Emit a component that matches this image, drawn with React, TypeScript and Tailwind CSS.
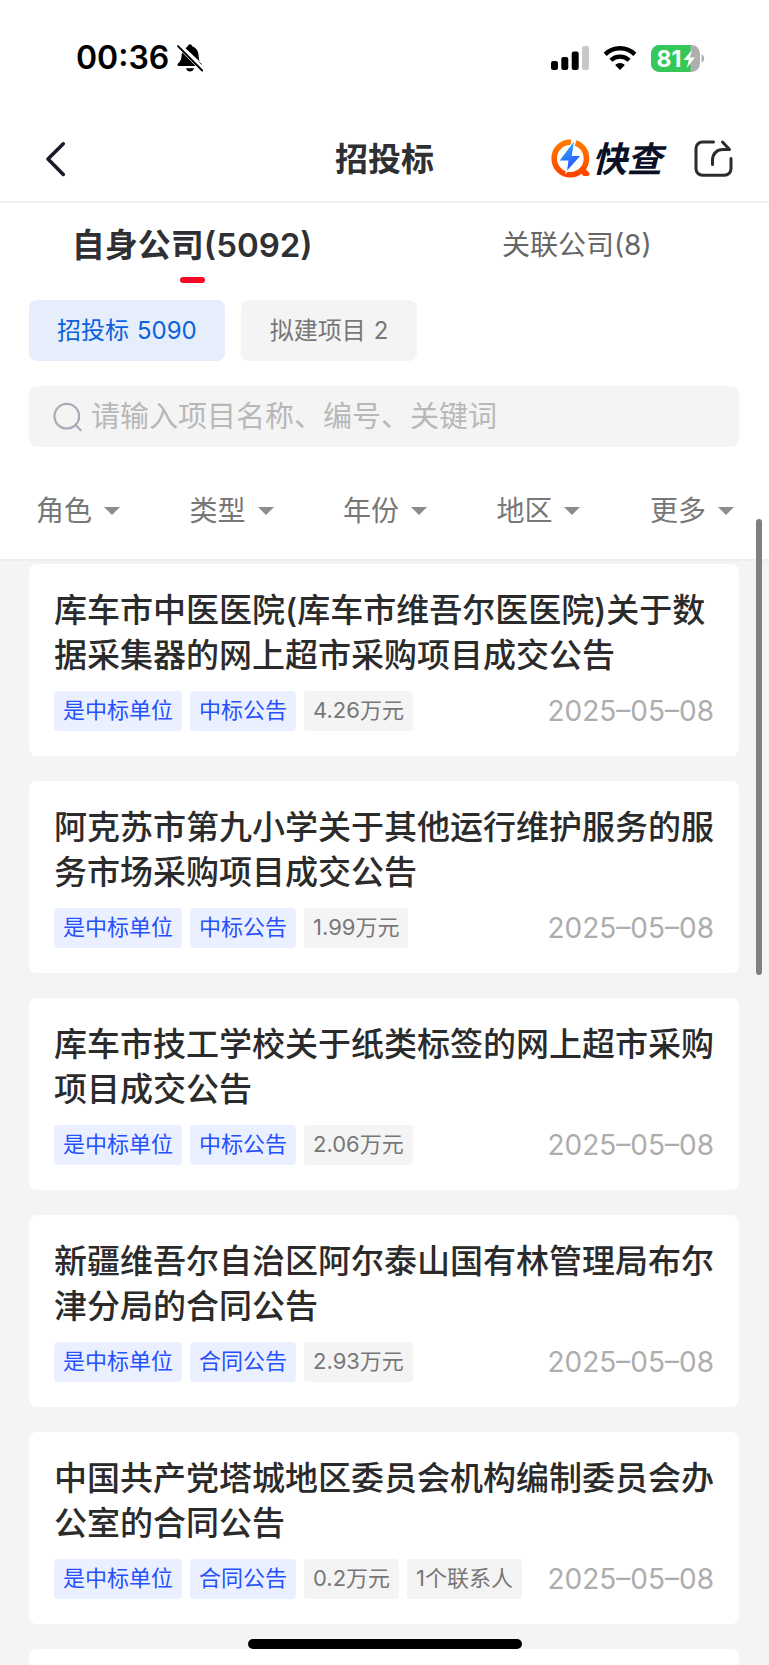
type Tag = { text: string; tone: "blue" | "gray" };
type Notice = { title: string; tags: Tag[]; date: string };

const notice = (title: string, kind: string, extras: string[]): Notice => ({
  title,
  date: "2025–05–08",
  tags: [
    { text: "是中标单位", tone: "blue" },
    { text: kind, tone: "blue" },
    ...extras.map((text): Tag => ({ text, tone: "gray" })),
  ],
});

const notices: Notice[] = [
  notice("库车市中医医院(库车市维吾尔医医院)关于数据采集器的网上超市采购项目成交公告", "中标公告", ["4.26万元"]),
  notice("阿克苏市第九小学关于其他运行维护服务的服务市场采购项目成交公告", "中标公告", ["1.99万元"]),
  notice("库车市技工学校关于纸类标签的网上超市采购项目成交公告", "中标公告", ["2.06万元"]),
  notice("新疆维吾尔自治区阿尔泰山国有林管理局布尔津分局的合同公告", "合同公告", ["2.93万元"]),
  notice("中国共产党塔城地区委员会机构编制委员会办公室的合同公告", "合同公告", ["0.2万元", "1个联系人"]),
];

const filters = ["角色", "类型", "年份", "地区", "更多"];

function StatusBar() {
  return (
    <div className="flex h-[116px] shrink-0 items-center justify-between pr-16 pl-[76px]">
      <div className="flex items-center gap-2 text-black">
        <span className="text-[32px] leading-10 font-semibold">00:36</span>
        <svg className="h-7 w-[26px]" viewBox="0 0 26 28" aria-hidden="true">
          <path d="M8.5 4.2C9.6 3 10.4 2.7 10.8 2.2 11.3 1 12 .3 13 .3s1.7.7 2.2 1.9c3.7 1.3 6 4.3 6.3 8.3.2 3.2.4 5.300 1.200 6.900zM5.300 8.400 18.500 22H1.700c-1.200 0-1.600-1.300-.9-2.200C3 17.500 4.300 16 4.500 12.500c.1-1.700.3-2.900.8-4.100zM9 24.200h8c-.6 2-2 3.300-4 3.300s-3.400-1.300-4-3.300zM21 17l3.600 2.800v1.200z" />
          <path d="M1 2.200 25.200 26.500" stroke="#000" strokeWidth="1.900" strokeLinecap="round" />
        </svg>
      </div>
      <div className="flex items-center">
        <svg className="h-6 w-[38px]" viewBox="0 0 38 24" aria-hidden="true">
          <rect x="0" y="15" width="7" height="9" rx="2.200" />
          <rect x="10.300" y="11" width="7" height="13" rx="2.200" />
          <rect x="20.700" y="5.500" width="7" height="18.500" rx="2.200" />
          <rect x="31" y="0" width="7" height="24" rx="2.200" fill="#c8c8c8" />
        </svg>
        <svg className="ml-[14px] h-6 w-[34px]" viewBox="0 0 34 24" aria-hidden="true">
          <g fill="none" stroke="#000" strokeWidth="4.400">
            <path d="M2.200 8.400a21 21 0 0 1 29.600 0" />
            <path d="M7.900 14.300a13 13 0 0 1 18.200 0" />
          </g>
          <path d="M17 24l-4.900-4.900a7 7 0 0 1 9.800 0z" />
        </svg>
        <svg className="ml-[14px] h-[27px] w-[54px]" viewBox="0 0 54 27" role="img" aria-label="81%">
          <defs>
            <clipPath id="cell">
              <rect width="49" height="27" rx="8.500" />
            </clipPath>
          </defs>
          <g clipPath="url(#cell)">
            <rect width="49" height="27" fill="#afafaf" />
            <rect width="39.500" height="27" fill="#34c759" />
          </g>
          <path d="M50.500 9.500c3.600 1 3.600 7 0 8z" fill="#afafaf" />
          <text x="5.500" y="21.500" fill="#fff" fontSize="23" fontWeight="700" fontFamily="Inter, sans-serif">81</text>
          <path d="M41 5 32.500 15h5.300L35.800 23 44 12.500h-5z" fill="#fff" />
        </svg>
      </div>
    </div>
  );
}

function Header() {
  return (
    <header className="grid h-[87px] shrink-0 grid-cols-[1fr_auto_1fr] items-center border-b-2 border-[#f0f0f0] px-9">
      <button type="button" aria-label="返回" className="justify-self-start pl-[9px]">
        <svg className="h-9 w-[22px]" viewBox="0 0 22 36" fill="none" stroke="#1a1a28" strokeWidth="3.600" strokeLinecap="round" strokeLinejoin="round">
          <path d="M18.300 2.800 3 18 18.300 33.400" />
        </svg>
      </button>
      <h1 className="text-[33px] leading-10 font-semibold text-[#2f3033]">招投标</h1>
      <div className="flex items-center justify-self-end">
        <svg className="h-[39px] w-[39px]" viewBox="0 0 39 39" aria-hidden="true">
          <defs>
            <linearGradient id="ring" x1="0" y1="0" x2="0" y2="1">
              <stop offset="0" stopColor="#ff7a00" />
              <stop offset="1" stopColor="#ff4400" />
            </linearGradient>
            <linearGradient id="bolt" x1="0" y1="0" x2="0.300" y2="1">
              <stop offset="0" stopColor="#35c0ff" />
              <stop offset="1" stopColor="#2450ff" />
            </linearGradient>
          </defs>
          <path d="M20 3.200C10.400 2.800 3.200 10.200 3.200 19.400S10.400 35.700 19.300 35.700 35.500 28.500 35.500 19.400C35.500 12 31 5.900 24.500 4" fill="none" stroke="url(#ring)" strokeWidth="5.600" />
          <path d="M27.500 32.500l5-5 5.600 6.200c1.200 1.400.3 3.200-1.500 3.200h-4z" fill="#ff4a00" />
          <path d="M23.800.5 7.500 22.200h9.300L15.200 33.500 30.500 16.300h-9z" fill="url(#bolt)" stroke="#fff" strokeWidth="1.200" />
        </svg>
        <span className="ml-0.5 text-[35px] leading-10 font-bold text-[#0b1026] italic">快查</span>
        <button type="button" aria-label="分享" className="ml-8">
          <svg className="h-[39px] w-[39px]" viewBox="0 0 39 39" fill="none" stroke="#2b2b2b" strokeWidth="3" strokeLinecap="round" strokeLinejoin="round">
            <path d="M19.500 3H8.500A6.500 6.500 0 0 0 2 9.500V29.800a6.500 6.500 0 0 0 6.500 6.500H30.500a6.500 6.500 0 0 0 6.500-6.500V19.500" />
            <path d="M18.500 25.500V21.500C18.500 14.500 23 10.500 29 10.500H35.500L28.500 3" />
          </svg>
        </button>
      </div>
    </header>
  );
}

function NoticeCard({ item }: { item: Notice }) {
  return (
    <article className="shrink-0 rounded-lg bg-white px-[25px] pt-6 pb-[25px]">
      <h2 className="text-[33px] leading-[45px] font-medium break-all text-[#2b2b2b]">{item.title}</h2>
      <div className="mt-[13px] flex items-center justify-between">
        <div className="flex gap-2">
          {item.tags.map((tag) => (
            <span
              key={tag.text}
              className={
                tag.tone === "blue"
                  ? "rounded bg-[#eaf0ff] px-[9px] pb-0.5 text-[22px] leading-[38px] text-[#2650fe]"
                  : "rounded bg-[#f4f4f4] px-[9px] pb-0.5 text-[22px] leading-[38px] text-[#777777]"
              }
            >
              {tag.text}
            </span>
          ))}
        </div>
        <time dateTime="2025-05-08" className="text-[28px] leading-10 text-[#adadad]">
          {item.date}
        </time>
      </div>
    </article>
  );
}

export default function App() {
  return (
    <div className="relative flex h-screen flex-col overflow-hidden bg-white font-[Inter,'Noto_Sans_CJK_SC',sans-serif]">
      <StatusBar />
      <Header />

      <nav className="grid shrink-0 grid-cols-2 pt-[18px]">
        <button type="button" className="flex flex-col items-center gap-2">
          <span className="text-[33px] leading-[48px] font-semibold text-[#2f3033]">自身公司(5092)</span>
          <span className="h-[6px] w-[25px] rounded-full bg-[#f50a25]" />
        </button>
        <button type="button" className="flex flex-col items-center">
          <span className="text-[28px] leading-[48px] text-[#666666]">关联公司(8)</span>
        </button>
      </nav>

      <div className="flex shrink-0 gap-4 px-[29px] pt-[17px]">
        <button type="button" className="flex gap-2 rounded-lg bg-[#e6edfb] px-7 text-[24px] leading-[61px] text-[#0b62dd]">
          <span>招投标</span> <span>5090</span>
        </button>
        <button type="button" className="flex gap-2 rounded-lg bg-[#f4f4f4] px-[29px] text-[24px] leading-[61px] text-[#777777]">
          <span>拟建项目</span> <span>2</span>
        </button>
      </div>

      <label className="mt-[25px] mr-[30px] ml-[29px] flex h-[61px] shrink-0 items-center gap-2 rounded-lg bg-[#f4f4f4] px-6">
        <svg className="h-[30px] w-[30px] shrink-0" viewBox="0 0 30 30" fill="none" stroke="#a9abb8" strokeWidth="2.200" strokeLinecap="round" aria-hidden="true">
          <circle cx="13.800" cy="14.200" r="12.300" />
          <path d="M22.600 23 27.700 28.200" />
        </svg>
        <input
          type="search"
          aria-label="搜索"
          placeholder="请输入项目名称、编号、关键词"
          className="h-full min-w-0 flex-1 bg-transparent text-[29px] outline-none placeholder:text-[#b8b8b8]"
        />
      </label>

      <div className="flex shrink-0 justify-between border-b-2 border-[#eeeeee] pt-11 pr-[35px] pb-7 pl-9">
        {filters.map((name) => (
          <button key={name} type="button" className="flex items-center gap-3 text-[28px] leading-10 text-[#777777]">
            {name}
            <svg className="h-2 w-4" viewBox="0 0 16 8" fill="#8c8c8c" aria-hidden="true">
              <path d="M0 0H16L8 8z" />
            </svg>
          </button>
        ))}
      </div>

      <main className="flex min-h-0 flex-1 flex-col gap-[25px] overflow-y-auto bg-[#f4f4f4] pt-[3px] pr-[30px] pl-[29px] [scrollbar-width:none]">
        {notices.map((item) => (
          <NoticeCard key={item.title} item={item} />
        ))}
        <article className="h-48 shrink-0 rounded-lg bg-white" />
      </main>

      <div className="absolute top-[519px] right-[7px] h-[456px] w-[6px] rounded-full bg-[#808080]" />
      <div className="absolute inset-x-0 bottom-4 mx-auto h-[10px] w-[274px] rounded-full bg-black" />
    </div>
  );
}
